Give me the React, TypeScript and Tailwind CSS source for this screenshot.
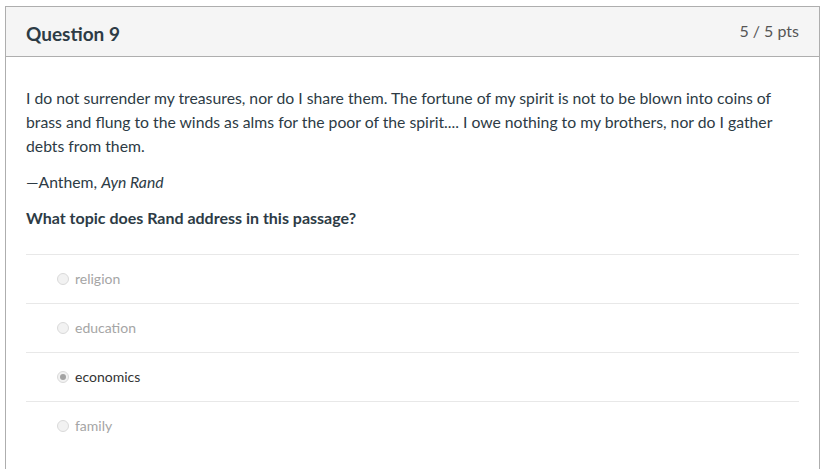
const ANSWERS = [
  { label: 'religion', selected: false },
  { label: 'education', selected: false },
  { label: 'economics', selected: true },
  { label: 'family', selected: false },
]

function Radio({ selected }: { selected: boolean }) {
  return (
    <span className="flex h-[12px] w-[12px] items-center justify-center rounded-full border border-[#dadada] bg-[#f2f2f2]">
      {selected && <span className="h-[6px] w-[6px] rounded-full bg-[#a3a3a3]" />}
    </span>
  )
}

export default function App() {
  return (
    <div className="min-h-[469px] bg-white pl-[5px] pt-[6px] font-['Lato','Open_Sans',sans-serif] text-[#2d3b45]">
      <div className="w-[815px] border border-b-0 border-[#aeaeae]">
        <div className="flex h-[50px] items-start justify-between border-b border-[#aeaeae] bg-[#f5f5f5] px-5">
          <h2 className="mt-[15px] text-[19px] font-bold leading-[24px] text-[#2d3b45]">Question 9</h2>
          <div className="mt-[12px] text-[16px] leading-[24px] text-[#555]">5 / 5 pts</div>
        </div>
        <div className="px-5 pb-5 pt-[29px] text-[15.75px] leading-[24px]">
          <p>
            I do not surrender my treasures, nor do I share them. The fortune of my spirit is not to be blown into coins of brass and flung to the winds as alms for the poor of the spirit.... I owe nothing to my brothers, nor do I gather debts from them.
          </p>
          <p className="mt-3">
            —Anthem, <em>Ayn Rand</em>
          </p>
          <p className="mt-3 text-[16px] font-bold">What topic does Rand address in this passage?</p>
          <div className="mt-6">
            {ANSWERS.map(a => (
              <div key={a.label} className="flex h-[49px] items-center border-t border-[#e8e8e8] pl-[31px]">
                <Radio selected={a.selected} />
                <span className={`ml-[6px] text-[14px] ${a.selected ? 'text-[#333]' : 'text-[#a5a5a5]'}`}>{a.label}</span>
              </div>
            ))}
          </div>
        </div>
      </div>
    </div>
  )
}
